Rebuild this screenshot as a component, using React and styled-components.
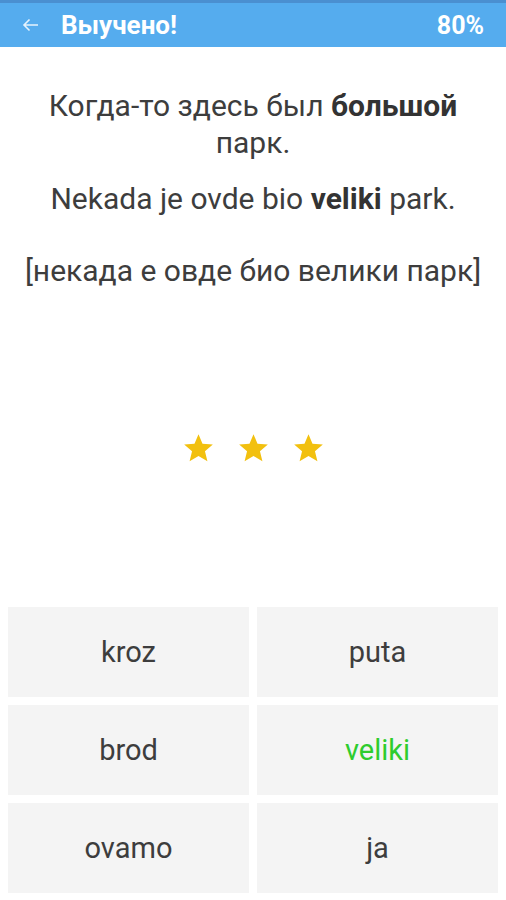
import React from "react";
import styled, { createGlobalStyle } from "styled-components";

const Global = createGlobalStyle`
  html, body { margin: 0; padding: 0; background: #fff; }
  body { font-family: Roboto, "Noto Sans", sans-serif; }
  * { box-sizing: border-box; }
`;

const Screen = styled.div`
  width: 506px;
  height: 900px;
  display: flex;
  flex-direction: column;
  background: #fff;
`;

const Header = styled.header`
  height: 47px;
  border-top: 3px solid #4a8fd0;
  background: #55acee;
  display: flex;
  align-items: center;
  padding: 0 22px 0 22px;
  color: #fff;
`;

const Back = styled.button`
  border: 0;
  background: none;
  padding: 0;
  margin-right: 22px;
  display: flex;
  align-items: center;
  color: rgba(255,255,255,0.85);
`;

const Title = styled.h1`
  margin: 0;
  font-size: 26px;
  font-weight: 700;
  flex: 1;
`;

const Percent = styled.span`
  font-size: 25px;
  font-weight: 700;
`;

const Sentences = styled.section`
  padding: 40px 24px 0;
  display: flex;
  flex-direction: column;
  text-align: center;
  color: #3d3d3d;
  font-size: 30px;
  line-height: 37px;
`;

const Line = styled.p`
  margin: 0;
  margin-top: ${p => p.$gap || 0}px;
  b { font-weight: 700; color: #333; }
`;

const Stars = styled.div`
  flex: 1;
  display: flex;
  justify-content: center;
  align-items: center;
  gap: 24px;
`;

const Grid = styled.div`
  display: grid;
  grid-template-columns: 1fr 1fr;
  grid-auto-rows: 90px;
  gap: 8px;
  padding: 0 8px 7px;
`;

const Choice = styled.button`
  border: 0;
  background: #f4f4f4;
  font-family: Roboto, sans-serif;
  font-size: 29px;
  color: ${p => (p.$correct ? "#2ecc2e" : "#3d3d3d")};
  display: flex;
  align-items: center;
  justify-content: center;
  padding: 0;
`;

const Star = () => (
  <svg width="31" height="30" viewBox="0 0 24 23">
    <path
      fill="#f2c00f"
      d="M12 0.8l3.1 7.4 8 0.6-6.1 5.2 1.9 7.8L12 17.6l-6.9 4.2 1.9-7.8L0.9 8.8l8-0.6z"
    />
  </svg>
);

const words = [
  { w: "kroz" },
  { w: "puta" },
  { w: "brod" },
  { w: "veliki", c: true },
  { w: "ovamo" },
  { w: "ja" },
];

export default function App() {
  return (
    <>
      <Global />
      <Screen>
        <Header>
          <Back aria-label="back">
            <svg width="17" height="14" viewBox="0 0 17 14">
              <path d="M16 7H2M7.5 1.5L2 7l5.5 5.5" stroke="currentColor" strokeWidth="1.6" fill="none" />
            </svg>
          </Back>
          <Title>Выучено!</Title>
          <Percent>80%</Percent>
        </Header>
        <Sentences>
          <Line>Когда-то здесь был <b>большой</b> парк.</Line>
          <Line $gap={19}>Nekada je ovde bio <b>veliki</b> park.</Line>
          <Line $gap={35}>[некада е овде био велики парк]</Line>
        </Sentences>
        <Stars>
          <Star />
          <Star />
          <Star />
        </Stars>
        <Grid>
          {words.map(x => (
            <Choice key={x.w} $correct={x.c}>{x.w}</Choice>
          ))}
        </Grid>
      </Screen>
    </>
  );
}
